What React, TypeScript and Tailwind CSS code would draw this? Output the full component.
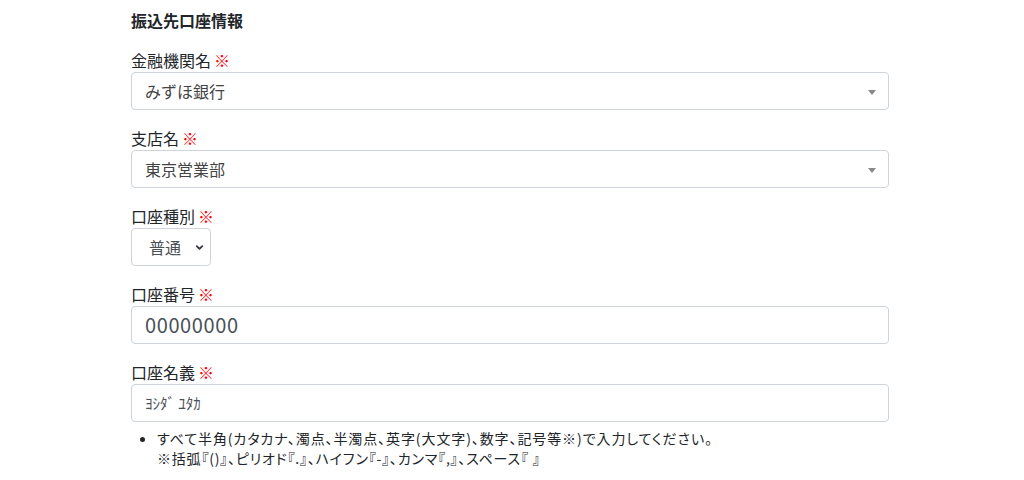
import { ChevronDown } from 'lucide-react';

const font = { fontFamily: '"Segoe UI", "Noto Sans CJK JP", "Noto Sans", sans-serif' };

const Req = () => <span className="ml-[3px] text-[#ff0000]">※</span>;

const Label = ({ children }: { children: React.ReactNode }) => (
    <label className="block h-6 leading-6 text-base text-[#212529]">
        {children}
        <Req />
    </label>
);

const Select2 = ({ value }: { value: string }) => (
    <div className="relative flex items-center h-[38px] w-full rounded border border-[#ced4da] bg-white pl-[13px] text-base text-[#444]">
        {value}
        <span className="absolute right-[12px] top-[17px] h-0 w-0 border-x-[4px] border-t-[5px] border-x-transparent border-t-[#888]" />
    </div>
);

export default function App() {
    return (
        <div className="min-h-[480px] w-full bg-white" style={font}>
            <div className="ml-[131px] w-[758px] pt-[8px]">
                <h5 className="h-6 leading-6 text-base font-bold text-[#212529] mb-4">振込先口座情報</h5>

                <div className="mb-4">
                    <Label>金融機関名</Label>
                    <Select2 value="みずほ銀行" />
                </div>

                <div className="mb-4">
                    <Label>支店名</Label>
                    <Select2 value="東京営業部" />
                </div>

                <div className="mb-4">
                    <Label>口座種別</Label>
                    <div className="relative flex items-center h-[38px] w-[80px] rounded border border-[#ced4da] bg-white pl-[17px] text-base text-[#495057]">
                        普通
                        <ChevronDown size={11} strokeWidth={4} className="absolute right-[5px] top-[13px] text-[#343a40]" />
                    </div>
                </div>

                <div className="mb-4">
                    <Label>口座番号</Label>
                    <div className="flex items-center h-[38px] w-full rounded border border-[#ced4da] bg-white pl-[13px] text-[20px] tracking-[0.6px] text-[#495057]">
                        00000000
                    </div>
                </div>

                <div>
                    <Label>口座名義</Label>
                    <div className="flex items-center h-[38px] w-full rounded border border-[#ced4da] bg-white pl-[13px] text-[15px] text-[#495057]">
                        ﾖｼﾀﾞ ﾕﾀｶ
                    </div>
                    <ul className="mt-[6px] list-disc pl-[26px] text-[14px] leading-5 text-[#212529] [font-feature-settings:'palt']">
                        <li className="tracking-[0.9px]">
                            すべて半角(カタカナ、濁点、半濁点、英字(大文字)、数字、記号等※)で入力してください。
                            <br />
                            <span className="tracking-[0.8px]">※括弧『()』、ピリオド『.』、ハイフン『-』、カンマ『,』、スペース『 』</span>
                        </li>
                    </ul>
                </div>
            </div>
        </div>
    );
}
